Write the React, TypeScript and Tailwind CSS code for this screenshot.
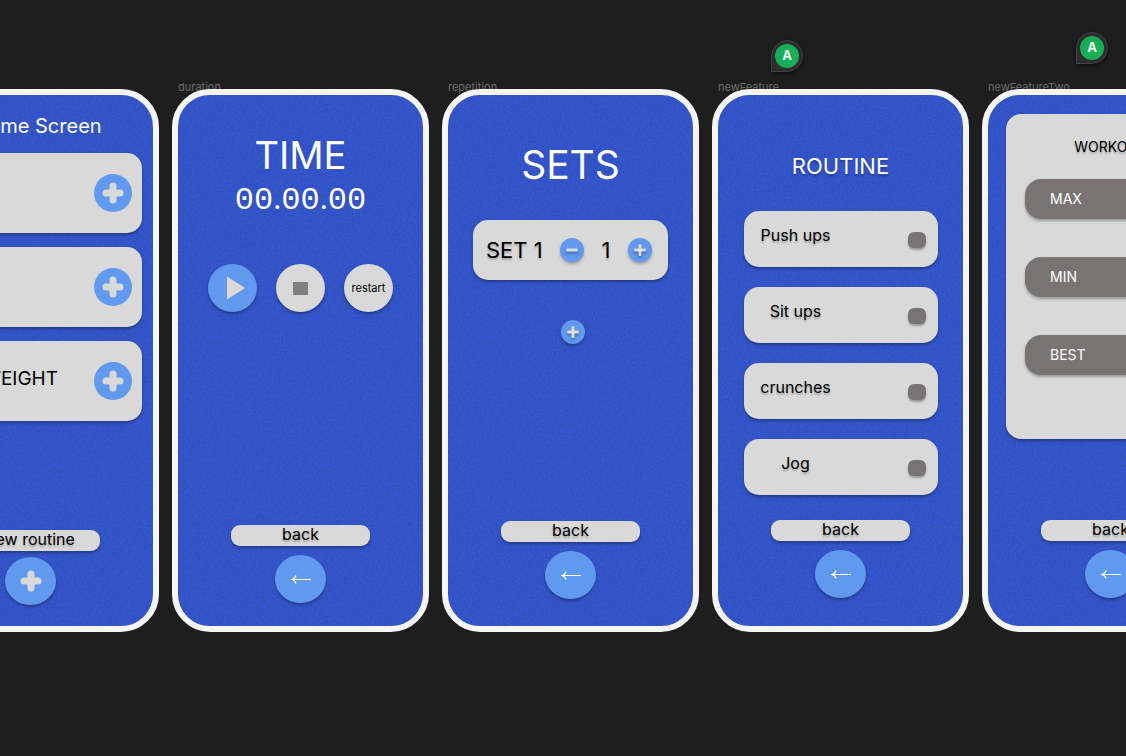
import type { ReactNode } from "react";

const cardShadow = "shadow-[0_2px_3px_rgba(0,0,0,0.3)]";
const textShadow = "[text-shadow:0_2px_2px_rgba(0,0,0,0.25)]";

function Grain() {
  return (
    <svg aria-hidden="true" className="pointer-events-none absolute inset-0 h-full w-full opacity-25">
      <filter id="grain" x="0" y="0" width="100%" height="100%" colorInterpolationFilters="sRGB">
        <feTurbulence type="fractalNoise" baseFrequency="0.5" numOctaves="3" seed="4" />
        <feColorMatrix values="0 0 0 0 0.2  0 0 0 0 0.26  0 0 0 0 0.42  3.4 1.6 0 0 -2.2" />
      </filter>
      <rect width="100%" height="100%" filter="url(#grain)" />
    </svg>
  );
}

function Frame({ name, className = "", children }: { name?: string; className?: string; children: ReactNode }) {
  return (
    <article className="w-[257px] shrink-0">
      <p className="-mb-1.5 h-4 pl-1.5 text-[11px] leading-4 text-[#6c6c6c]">{name}</p>
      <div className="relative min-h-[543px] overflow-hidden rounded-[38px] border-[6px] border-[#f5f5f7] bg-[#3456d0]">
        <Grain />
        <div className={"relative flex min-h-[531px] flex-col items-center " + className}>{children}</div>
      </div>
    </article>
  );
}

function PlusIcon({ className }: { className: string }) {
  return (
    <svg viewBox="0 0 22 22" aria-hidden="true" className={className}>
      <path d="M11 4v14M4 11h14" stroke="#d9d9d9" strokeWidth="7" strokeLinecap="round" />
    </svg>
  );
}

function Pill({ children }: { children: ReactNode }) {
  return (
    <span className={`block h-[21px] w-[139px] rounded-[9px] bg-[#d9d9d9] text-center leading-[18px] text-black ${cardShadow} ${textShadow}`}>
      {children}
    </span>
  );
}

function Back() {
  return (
    <a href="#back" className="mt-auto flex flex-col items-center gap-[9px] text-base">
      <Pill>back</Pill>
      <span className={`flex h-12 w-[51px] items-center justify-center rounded-[50%] bg-[#6199ee] ${cardShadow}`}>
        <svg viewBox="0 0 20 12" aria-hidden="true" className="h-3 w-5">
          <path d="M20 6.5H1M5 2.5C4.5 4.4 3 5.9 0.8 6.5C3 7.1 4.5 8.6 5 10.5" fill="none" stroke="#fff" strokeWidth="1.2" />
        </svg>
      </span>
    </a>
  );
}

function HomeCard({ label, name }: { label?: string; name: string }) {
  return (
    <div className={`flex h-20 w-[223px] items-center justify-end gap-9 rounded-[15px] bg-[#d9d9d9] pr-[10px] text-[19px] text-black ${cardShadow}`}>
      {label && <span className="pb-1">{label}</span>}
      <button aria-label={name} className="flex size-[38px] items-center justify-center rounded-full bg-[#6199ee]">
        <PlusIcon className="size-[22px]" />
      </button>
    </div>
  );
}

function HomeScreen() {
  return (
    <Frame>
      <h1 className="pt-[18px] pl-3.5 text-xl leading-[26px] text-white">Home Screen</h1>
      <div className="flex flex-col gap-[14px] pt-[14px]">
        <HomeCard name="Open time" />
        <HomeCard name="Open sets" />
        <HomeCard name="Open weight" label="WEIGHT" />
      </div>
      <div className="mt-auto flex flex-col items-center gap-[6px] pb-[21px] text-base">
        <Pill>new routine</Pill>
        <button aria-label="Add routine" className={`flex h-12 w-[51px] items-center justify-center rounded-[50%] bg-[#6199ee] ${cardShadow}`}>
          <PlusIcon className="size-[22px]" />
        </button>
      </div>
    </Frame>
  );
}

function Digits({ children }: { children: ReactNode }) {
  return <span className="font-['Liberation_Mono',monospace] text-[32px]">{children}</span>;
}

function DurationScreen() {
  const round = `flex h-12 w-[49px] items-center justify-center rounded-[50%] ${cardShadow}`;
  return (
    <Frame name="duration" className="pb-[23px]">
      <h2 className="pt-10 text-[38px] leading-10 text-white">TIME</h2>
      <p className="pt-1 text-[28px] leading-10 text-white">
        <Digits>00</Digits>.<Digits>00</Digits>.<Digits>00</Digits>
      </p>
      <div className="flex gap-[19px] pt-[43px]">
        <button aria-label="Play" className={`${round} bg-[#6199ee]`}>
          <svg viewBox="0 0 20 24" aria-hidden="true" className="ml-1.5 h-6 w-5">
            <path d="M1 0.5L19 12L1 23.5Z" fill="#d9d9d9" />
          </svg>
        </button>
        <button aria-label="Stop" className={`${round} bg-[#d9d9d9]`}>
          <span className="h-[13px] w-[15px] bg-[#808080]" />
        </button>
        <button className={`${round} bg-[#d9d9d9] text-[11px] text-black`}>restart</button>
      </div>
      <Back />
    </Frame>
  );
}

function StepButton({ name, minus = false }: { name: string; minus?: boolean }) {
  return (
    <button aria-label={name} className={`flex size-6 items-center justify-center rounded-full bg-[#6199ee] ${cardShadow}`}>
      <svg viewBox="0 0 14 14" aria-hidden="true" className="size-[14px] drop-shadow-[0_2px_1px_rgba(0,0,0,0.3)]">
        <path d={minus ? "M2.5 7h9" : "M7 2.5v9M2.5 7h9"} stroke="#dedede" strokeWidth="3" strokeLinecap="round" />
      </svg>
    </button>
  );
}

function RepetitionScreen() {
  return (
    <Frame name="repetition" className="pb-[27px]">
      <h2 className="pt-[50px] text-[39px] leading-10 text-white">SETS</h2>
      <div className={`mt-[35px] flex h-[60px] w-[195px] items-center justify-between rounded-[15px] bg-[#d9d9d9] pr-4 pl-[13px] text-[22px] text-black ${cardShadow} ${textShadow}`}>
        <span>SET 1</span>
        <StepButton name="Fewer repetitions" minus />
        <span>1</span>
        <StepButton name="More repetitions" />
      </div>
      <div className="pt-10 pl-1">
        <StepButton name="Add set" />
      </div>
      <Back />
    </Frame>
  );
}

function RoutineScreen() {
  return (
    <Frame name="newFeature" className="pb-[28px]">
      <h2 className={`pt-[57px] text-[22px] leading-7 text-white ${textShadow}`}>ROUTINE</h2>
      <ul className="flex flex-col gap-5 pt-[31px]">
        {["Push ups", "Sit ups", "crunches", "Jog"].map((name) => (
          <li key={name}>
            <label className={`flex h-14 w-[194px] items-start justify-between rounded-[15px] bg-[#d9d9d9] pr-3 text-base text-black ${cardShadow}`}>
              <span className={`w-[104px] pt-3 text-center leading-6 ${textShadow}`}>{name}</span>
              <input type="checkbox" className="mt-[21px] h-4 w-[18px] appearance-none rounded-[6px] bg-[#797474] shadow-[0_2px_2px_rgba(0,0,0,0.3)]" />
            </label>
          </li>
        ))}
      </ul>
      <Back />
    </Frame>
  );
}

function WorkoutScreen() {
  return (
    <Frame name="newFeatureTwo" className="pb-[28px]">
      <section className={`mt-[19px] h-[325px] w-[209px] rounded-[15px] bg-[#d9d9d9] ${cardShadow}`}>
        <h2 className={`pt-[22px] text-center text-sm leading-[22px] text-black ${textShadow}`}>WORKOUT</h2>
        <ul className="flex flex-col gap-[38px] px-[19px] pt-[21px]">
          {["MAX", "MIN", "BEST"].map((name) => (
            <li key={name} className={`flex h-10 items-center rounded-[16px] bg-[#797474] pl-[25px] text-sm text-white ${cardShadow}`}>
              {name}
            </li>
          ))}
        </ul>
      </section>
      <Back />
    </Frame>
  );
}

function CommentPin({ className }: { className: string }) {
  return (
    <button
      aria-label="Comment by A"
      className={`absolute flex size-8 items-center justify-center rounded-full rounded-bl-none border border-[#444144] bg-[#2f2c2f] shadow-[0_2px_4px_rgba(0,0,0,0.5)] ${className}`}
    >
      <span className="flex size-6 items-center justify-center rounded-full bg-[#17ae58] text-[13px] font-bold text-white">A</span>
    </button>
  );
}

export default function App() {
  return (
    <main className="relative min-h-screen overflow-hidden bg-[#1e1e1e] pt-[79px] font-['Inter',sans-serif]">
      <div className="-ml-[98px] flex gap-[13px]">
        <HomeScreen />
        <DurationScreen />
        <RepetitionScreen />
        <RoutineScreen />
        <WorkoutScreen />
      </div>
      <CommentPin className="top-10 left-[771px]" />
      <CommentPin className="top-8 left-[1076px]" />
    </main>
  );
}
